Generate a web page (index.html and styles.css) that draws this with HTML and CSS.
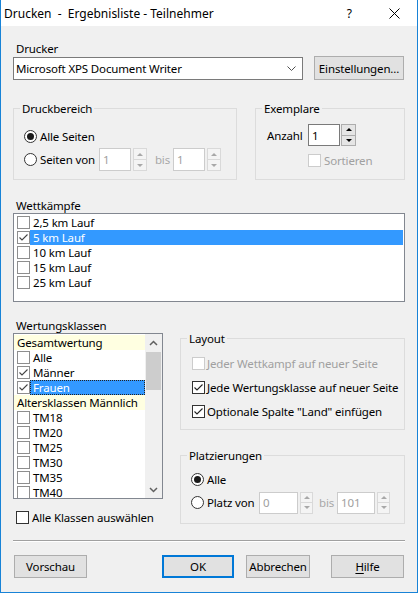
FILE: index.html
```html
<!DOCTYPE html>
<html lang="de">
<head>
<meta charset="utf-8">
<title>Drucken - Ergebnisliste - Teilnehmer</title>
<link rel="stylesheet" href="styles.css">
</head>
<body>
<div class="window">
  <header class="titlebar">
    <span class="title">Drucken  -  Ergebnisliste - Teilnehmer</span>
    <span class="help">?</span>
    <svg class="close" width="11" height="11" viewBox="0 0 11 11"><path d="M0.5 0.5L10.5 10.5M10.5 0.5L0.5 10.5" stroke="#000" stroke-width="1" fill="none"/></svg>
  </header>

  <main class="content">
    <div class="label label-printer">Drucker</div>
    <div class="printer-row">
      <div class="combo">
        <span class="combo-text">Microsoft XPS Document Writer</span>
        <svg class="combo-arrow" width="9" height="5" viewBox="0 0 9 5"><path d="M0.5 0.5L4.5 4.5L8.5 0.5" fill="none" stroke="#505050" stroke-width="1"/></svg>
      </div>
      <div class="btn btn-settings">Einstellungen...</div>
    </div>

    <div class="groups-row">
      <fieldset class="group group-range">
        <legend>Druckbereich</legend>
        <div class="opt-row first">
          <span class="radio checked"></span><span class="opt-text">Alle Seiten</span>
        </div>
        <div class="opt-row">
          <span class="radio"></span><span class="opt-text">Seiten von</span>
          <div class="spin disabled spin-pages">
            <span class="spin-input">1</span>
            <span class="spin-btns"><span class="spin-btn"><i class="tri-up"></i></span><span class="spin-btn"><i class="tri-down"></i></span></span>
          </div>
          <span class="bis">bis</span>
          <div class="spin disabled spin-pages spin-to">
            <span class="spin-input">1</span>
            <span class="spin-btns"><span class="spin-btn"><i class="tri-up"></i></span><span class="spin-btn"><i class="tri-down"></i></span></span>
          </div>
        </div>
      </fieldset>

      <fieldset class="group group-copies">
        <legend>Exemplare</legend>
        <div class="copies-row">
          <span class="copies-label">Anzahl</span>
          <div class="spin spin-copies">
            <span class="spin-input">1</span>
            <span class="spin-btns"><span class="spin-btn"><i class="tri-up"></i></span><span class="spin-btn"><i class="tri-down"></i></span></span>
          </div>
        </div>
        <div class="sort-row">
          <span class="cb disabled"></span><span class="opt-text disabled-text">Sortieren</span>
        </div>
      </fieldset>
    </div>

    <div class="label label-events">Wettkämpfe</div>
    <div class="listbox list-events">
      <div class="item"><span class="cb list-cb"></span><span class="item-text">2,5 km Lauf</span></div>
      <div class="item"><span class="cb list-cb checked"><svg width="11" height="11" viewBox="0 0 11 11"><path d="M1.5 5.5L4 8L9.5 2.5" fill="none" stroke="#444" stroke-width="1.1"/></svg></span><span class="item-text selected">5 km Lauf</span></div>
      <div class="item"><span class="cb list-cb"></span><span class="item-text">10 km Lauf</span></div>
      <div class="item"><span class="cb list-cb"></span><span class="item-text">15 km Lauf</span></div>
      <div class="item"><span class="cb list-cb"></span><span class="item-text">25 km Lauf</span></div>
    </div>

    <div class="lower">
      <div class="col-left">
        <div class="label label-classes">Wertungsklassen</div>
        <div class="listbox list-classes">
          <div class="list-items">
            <div class="item header">Gesamtwertung</div>
            <div class="item"><span class="cb list-cb"></span><span class="item-text">Alle</span></div>
            <div class="item"><span class="cb list-cb checked"><svg width="11" height="11" viewBox="0 0 11 11"><path d="M1.5 5.5L4 8L9.5 2.5" fill="none" stroke="#444" stroke-width="1.1"/></svg></span><span class="item-text">Männer</span></div>
            <div class="item"><span class="cb list-cb checked"><svg width="11" height="11" viewBox="0 0 11 11"><path d="M1.5 5.5L4 8L9.5 2.5" fill="none" stroke="#444" stroke-width="1.1"/></svg></span><span class="item-text selected focus">Frauen</span></div>
            <div class="item header">Altersklassen Männlich</div>
            <div class="item"><span class="cb list-cb"></span><span class="item-text">TM18</span></div>
            <div class="item"><span class="cb list-cb"></span><span class="item-text">TM20</span></div>
            <div class="item"><span class="cb list-cb"></span><span class="item-text">TM25</span></div>
            <div class="item"><span class="cb list-cb"></span><span class="item-text">TM30</span></div>
            <div class="item"><span class="cb list-cb"></span><span class="item-text">TM35</span></div>
            <div class="item"><span class="cb list-cb"></span><span class="item-text">TM40</span></div>
          </div>
          <div class="scrollbar">
            <span class="sb-arrow"><svg width="9" height="6" viewBox="0 0 9 6"><path d="M1 5L4.5 1.5L8 5" fill="none" stroke="#606060" stroke-width="1.5"/></svg></span>
            <span class="sb-track"><span class="sb-thumb"></span></span>
            <span class="sb-arrow"><svg width="9" height="6" viewBox="0 0 9 6"><path d="M1 1L4.5 4.5L8 1" fill="none" stroke="#606060" stroke-width="1.5"/></svg></span>
          </div>
        </div>
        <div class="all-row">
          <span class="cb"></span><span class="opt-text">Alle Klassen auswählen</span>
        </div>
      </div>

      <div class="col-right">
        <fieldset class="group group-layout">
          <legend>Layout</legend>
          <div class="cb-row">
            <span class="cb disabled"></span><span class="opt-text disabled-text">Jeder Wettkampf auf neuer Seite</span>
          </div>
          <div class="cb-row">
            <span class="cb checked"><svg width="11" height="11" viewBox="0 0 11 11"><path d="M1.5 5.5L4 8L9.5 2.5" fill="none" stroke="#222" stroke-width="1.1"/></svg></span><span class="opt-text">Jede Wertungsklasse auf neuer Seite</span>
          </div>
          <div class="cb-row">
            <span class="cb checked"><svg width="11" height="11" viewBox="0 0 11 11"><path d="M1.5 5.5L4 8L9.5 2.5" fill="none" stroke="#222" stroke-width="1.1"/></svg></span><span class="opt-text">Optionale Spalte "Land" einfügen</span>
          </div>
        </fieldset>

        <fieldset class="group group-places">
          <legend>Platzierungen</legend>
          <div class="opt-row place-row">
            <span class="radio checked"></span><span class="opt-text">Alle</span>
          </div>
          <div class="opt-row place-row">
            <span class="radio"></span><span class="opt-text place-text">Platz von</span>
            <div class="spin disabled spin-place">
              <span class="spin-input">0</span>
              <span class="spin-btns"><span class="spin-btn"><i class="tri-up"></i></span><span class="spin-btn"><i class="tri-down"></i></span></span>
            </div>
            <span class="bis bis-place">bis</span>
            <div class="spin disabled spin-place spin-to">
              <span class="spin-input">101</span>
              <span class="spin-btns"><span class="spin-btn"><i class="tri-up"></i></span><span class="spin-btn"><i class="tri-down"></i></span></span>
            </div>
          </div>
        </fieldset>
      </div>
    </div>

    <div class="separator"></div>

    <div class="buttons">
      <div class="btn btn-preview">Vorschau</div>
      <div class="btn btn-ok">OK</div>
      <div class="btn btn-cancel">Abbrechen</div>
      <div class="btn btn-help"><u>H</u>ilfe</div>
    </div>
  </main>
</div>
</body>
</html>
```

FILE: styles.css
```css
* { box-sizing: border-box; }

html, body {
  margin: 0;
  padding: 0;
}

body {
  width: 418px;
  height: 593px;
  overflow: hidden;
  font-family: "Noto Sans", "Open Sans", sans-serif;
  font-size: 11.5px;
  letter-spacing: -0.15px;
  color: #000;
  background: #ffffff;
}

.window {
  width: 418px;
  height: 593px;
  border: 1px solid #1883d7;
  border-top: 0;
  display: flex;
  flex-direction: column;
  background: #f0f0f0;
}

/* title bar */
.titlebar {
  flex: none;
  height: 26px;
  background: #fff;
  display: flex;
  align-items: center;
  padding-left: 3px;
  font-size: 12px;
  letter-spacing: 0;
}
.title { flex: 1; white-space: pre; }
.help { margin-right: 37px; }
.close { margin-right: 17px; }

/* content */
.content {
  flex: 1;
  padding: 16px 12px 0 12px;
  display: flex;
  flex-direction: column;
}

.label { line-height: 15px; padding-left: 3px; }
.label-printer { line-height: 14px; }
.label-events { margin-top: 18px; }

.printer-row {
  display: flex;
  height: 24px;
  gap: 11px;
}
.combo {
  flex: 1;
  height: 23px;
  margin-top: 1px;
  background: #fff;
  border: 1px solid #7a7a7a;
  display: flex;
  align-items: center;
  padding-left: 2px;
}
.combo-text { flex: 1; }
.combo-arrow { margin-right: 6px; }

.btn {
  height: 23px;
  background: #e1e1e1;
  border: 1px solid #adadad;
  display: flex;
  align-items: center;
  justify-content: center;
}
.btn-settings { width: 90px; height: 24px; margin-right: 1px; }

/* group boxes */
.group {
  margin: 0;
  padding: 0;
  min-width: 0;
  border: 1px solid #dcdcdc;
}
.group legend {
  padding: 0 2px;
  margin-left: 6px;
  line-height: 15px;
}

.groups-row {
  display: flex;
  gap: 18px;
  margin-top: 21px;
}
.group-range {
  width: 224px;
  height: 79px;
  padding-top: 9px;
}
.group-range .opt-row { padding-left: 10px; }
.group-copies {
  flex: 1;
  height: 79px;
  padding-top: 8px;
}

.opt-row {
  display: flex;
  align-items: center;
  height: 23px;
}
.opt-text { white-space: nowrap; }
.disabled-text { color: #a0a0a0; }

.radio {
  width: 13px;
  height: 13px;
  border: 1px solid #333;
  border-radius: 50%;
  background: #fff;
  margin-right: 3px;
  display: flex;
  align-items: center;
  justify-content: center;
  flex: none;
}
.radio.checked::after {
  content: "";
  width: 7px;
  height: 7px;
  border-radius: 50%;
  background: #1a1a1a;
}

.cb {
  width: 13px;
  height: 13px;
  border: 1px solid #333;
  background: #fff;
  flex: none;
  display: flex;
  align-items: center;
  justify-content: center;
}
.cb svg { display: block; }
.cb.disabled { border-color: #cccccc; }
.list-cb { border-color: #8e8e8e; }

/* spin boxes */
.spin {
  display: flex;
  height: 23px;
  margin-left: 4px;
  flex: none;
}
.spin-input {
  width: 32px;
  border: 1px solid #7a7a7a;
  background: #fff;
  padding-left: 3px;
  display: flex;
  align-items: center;
}
.spin-btns {
  width: 14px;
  margin-left: 2px;
  display: flex;
  flex-direction: column;
  border: 1px solid #adadad;
  background: #e5e5e5;
}
.spin-btn {
  flex: 1;
  display: flex;
  align-items: center;
  justify-content: center;
}
.spin-btn + .spin-btn { border-top: 1px solid #adadad; }
.tri-up, .tri-down {
  width: 0;
  height: 0;
  border-left: 3px solid transparent;
  border-right: 3px solid transparent;
}
.tri-up { border-bottom: 3px solid #000; }
.tri-down { border-top: 3px solid #000; }

.spin.disabled .spin-input { border-color: #cccccc; color: #a0a0a0; }
.spin.disabled .spin-btns { border-color: #d9d9d9; background: #f4f4f4; }
.spin.disabled .spin-btn + .spin-btn { border-top-color: #d9d9d9; }
.spin.disabled .tri-up { border-bottom-color: #a8a8a8; }
.spin.disabled .tri-down { border-top-color: #a8a8a8; }

.bis { color: #a8a8a8; margin-left: 8px; }
.spin-to { margin-left: 3px; }

.copies-row {
  display: flex;
  align-items: center;
  height: 22px;
  padding-left: 11px;
}
.copies-label { width: 41px; }
.spin-copies { height: 22px; margin-left: 0; }
.spin-copies .spin-btns { margin-left: 1px; width: 15px; }

.sort-row {
  display: flex;
  align-items: center;
  height: 23px;
  margin-top: 3px;
  padding-left: 52px;
}
.sort-row .cb { margin-right: 3px; }

/* list boxes */
.listbox {
  background: #fff;
  border: 1px solid #828790;
}
.list-events {
  height: 89px;
  padding-top: 1px;
}
.item {
  height: 15px;
  display: flex;
  align-items: center;
  padding-left: 3px;
  white-space: nowrap;
}
.item-text {
  flex: 1;
  height: 15px;
  line-height: 15px;
  padding-left: 3px;
}
.list-events .item-text { margin-right: 1px; }
.item-text.selected {
  background: #3399ff;
  color: #fff;
}
.item-text.focus {
  border: 1px dotted #222;
  line-height: 13px;
  padding-left: 2px;
}
.item.header {
  background: #ffffe1;
  padding-left: 3px;
  line-height: 15px;
}

.lower {
  margin-top: 16px;
  display: grid;
  grid-template-columns: 150px 1fr;
  column-gap: 17px;
}

.list-classes {
  height: 166px;
  display: flex;
  overflow: hidden;
}
.list-items {
  flex: 1;
  padding-top: 1px;
  overflow: hidden;
}
.scrollbar {
  width: 17px;
  flex: none;
  background: #f0f0f0;
  display: flex;
  flex-direction: column;
}
.sb-arrow {
  height: 17px;
  display: flex;
  align-items: center;
  justify-content: center;
}
.sb-track {
  flex: 1;
  padding: 1px 1px 0 1px;
}
.sb-thumb {
  display: block;
  height: 38px;
  background: #cdcdcd;
}

.all-row {
  display: flex;
  align-items: center;
  height: 16px;
  margin-top: 10px;
  padding-left: 3px;
}
.all-row .cb { margin-right: 3px; }

.group-layout {
  margin-top: 13px;
  height: 99px;
  padding-top: 5px;
}
.cb-row {
  display: flex;
  align-items: center;
  height: 24px;
  padding-left: 11px;
}
.cb-row .cb { margin-right: 2px; }

.group-places {
  margin-top: 18px;
  height: 76px;
  padding-top: 5px;
}
.place-row { padding-left: 10px; }
.place-text { width: 48px; }
.spin-place { height: 22px; margin-left: 4px; }
.spin-place .spin-input { width: 39px; }
.spin-place .spin-btns { width: 13px; }
.spin-place.spin-to { margin-left: 3px; }
.spin-place.spin-to .spin-input { width: 38px; }
.bis-place { margin-left: 6px; }

/* separator & buttons */
.separator {
  margin-top: 15px;
  height: 2px;
  border-top: 1px solid #a0a0a0;
  border-bottom: 1px solid #ffffff;
}

.buttons {
  display: flex;
  margin-top: 13px;
}
.btn-preview { width: 73px; margin-left: 1px; }
.btn-ok { width: 72px; margin-left: 75px; border: 2px solid #0078d7; }
.btn-cancel { width: 64px; margin-left: 12px; }
.btn-help { width: 73px; margin-left: 21px; }
.btn-help u { text-decoration-thickness: 1px; text-underline-offset: 2px; }
```
